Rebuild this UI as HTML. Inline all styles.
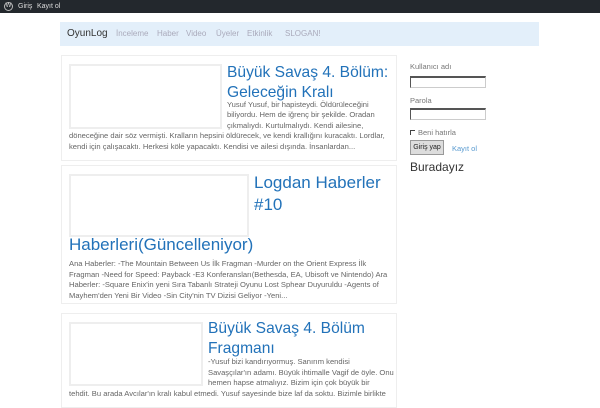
<!DOCTYPE html>
<html><head><meta charset="utf-8"><style>
*{margin:0;padding:0;box-sizing:border-box}
body{width:600px;height:400px;overflow:hidden;background:#fff;font-family:"Liberation Sans","DejaVu Sans",sans-serif;position:relative}
#bar{position:absolute;left:0;top:0;width:600px;height:13px;background:#23282d;color:#ddd;font-size:7px;line-height:13px}
#bar span{position:absolute;top:0}
#nav{position:absolute;left:60px;top:22px;width:479px;height:24px;background:#e3effa;font-size:8px;color:#aab;line-height:24px}
#nav span{position:absolute;top:0}
.card{position:absolute;left:61px;width:336px;border:1px solid #eee;background:#fff}
.img{position:absolute;border:2px solid #eee}
.a{position:absolute;white-space:nowrap}
.t{font-size:15.6px;line-height:20px;color:#2272b9}
.p{font-size:7.6px;line-height:10.5px;color:#666}
.side{position:absolute;left:410px;font-size:7.5px;color:#777}
.in{position:absolute;left:410px;width:76px;height:12px;border:1px solid #ccc;border-top:2px solid #555;border-left:1px solid #555}
</style></head><body>
<div id="bar"><span style="left:4px;top:2px;width:9px;height:9px;border-radius:50%;border:1px solid #bbb;font-size:6px;line-height:7px;text-align:center">W</span><span style="left:18px">Giriş</span><span style="left:37px">Kayıt ol</span></div>
<div id="nav"><span style="left:7px;color:#333;font-size:10px">OyunLog</span><span style="left:56px">İnceleme</span><span style="left:97px">Haber</span><span style="left:126px">Video</span><span style="left:156px">Üyeler</span><span style="left:187px">Etkinlik</span><span style="left:225px">SLOGAN!</span></div>

<div class="card" style="top:55px;height:106px"></div>
<div class="img" style="left:69px;top:64px;width:153px;height:65px"></div>
<div class="a t" style="left:227px;top:63px">Büyük Savaş 4. Bölüm:<br>Geleceğin Kralı</div>
<div class="a p" style="left:227px;top:99.5px">Yusuf Yusuf, bir hapisteydi. Öldürüleceğini<br>biliyordu. Hem de iğrenç bir şekilde. Oradan<br>çıkmalıydı. Kurtulmalıydı. Kendi ailesine,</div>
<div class="a p" style="left:69px;top:131px">döneceğine dair söz vermişti. Kralların hepsini öldürecek, ve kendi krallığını kuracaktı. Lordlar,<br>kendi için çalışacaktı. Herkesi köle yapacaktı. Kendisi ve ailesi dışında. İnsanlardan...</div>

<div class="card" style="top:165px;height:139px"></div>
<div class="img" style="left:69px;top:174px;width:180px;height:63px"></div>
<div class="a t" style="left:254px;top:172px;font-size:17px;line-height:22px">Logdan Haberler<br>#10</div>
<div class="a t" style="left:69px;top:235px;font-size:17px">Haberleri(Güncelleniyor)</div>
<div class="a p" style="left:69px;top:259px">Ana Haberler: -The Mountain Between Us İlk Fragman -Murder on the Orient Express İlk<br>Fragman -Need for Speed: Payback -E3 Konferansları(Bethesda, EA, Ubisoft ve Nintendo) Ara<br>Haberler: -Square Enix'in yeni Sıra Tabanlı Strateji Oyunu Lost Sphear Duyuruldu -Agents of<br>Mayhem'den Yeni Bir Video -Sin City'nin TV Dizisi Geliyor -Yeni...</div>

<div class="card" style="top:313px;height:95px"></div>
<div class="img" style="left:69px;top:322px;width:134px;height:64px"></div>
<div class="a t" style="left:208px;top:319px">Büyük Savaş 4. Bölüm<br>Fragmanı</div>
<div class="a p" style="left:208px;top:357px">-Yusuf bizi kandırıyormuş. Sanırım kendisi<br>Savaşçılar'ın adamı. Büyük ihtimalle Vagif de öyle. Onu<br>hemen hapse atmalıyız. Bizim için çok büyük bir</div>
<div class="a p" style="left:69px;top:388.5px">tehdit. Bu arada Avcılar'ın kralı kabul etmedi. Yusuf sayesinde bize laf da soktu. Bizimle birlikte</div>

<div class="side" style="top:62px">Kullanıcı adı</div>
<div class="in" style="top:76px"></div>
<div class="side" style="top:96px">Parola</div>
<div class="in" style="top:108px"></div>
<div class="side" style="top:128px"><span style="display:inline-block;width:5px;height:5px;border-left:1px solid #444;border-top:1px solid #444;margin-right:3px"></span>Beni hatırla</div>
<div style="position:absolute;left:410px;top:140px;width:34px;height:15px;background:#ddd;border:1px solid #999;font-size:7px;line-height:13px;text-align:center;color:#222">Giriş yap</div>
<div class="side" style="top:144px;left:452px;color:#5a9bd0">Kayıt ol</div>
<div style="position:absolute;left:410px;top:160px;font-size:12px;color:#333">Buradayız</div>
</body></html>
